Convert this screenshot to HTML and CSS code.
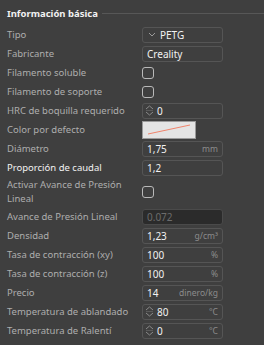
FILE: index.html
```html
<!DOCTYPE html>
<html lang="es">
<head>
  <meta charset="UTF-8">
  <meta name="viewport" content="width=device-width, initial-scale=1.0">
  <title>Información básica</title>
  <link rel="stylesheet" href="styles.css">
</head>
<body>
  <div class="section-head">
    <span class="section-title">Información básica</span>
    <span class="section-line"></span>
  </div>

  <div class="props">
    <div class="row">
      <label>Tipo</label>
      <div class="field combo">
        <svg class="chev" width="8" height="5" viewBox="0 0 8 5"><path d="M1 1 L4 4 L7 1" fill="none" stroke="#9a9a9a" stroke-width="1"/></svg>
        <span class="val">PETG</span>
      </div>
    </div>
    <div class="row">
      <label>Fabricante</label>
      <div class="field"><span class="val">Creality</span></div>
    </div>
    <div class="row">
      <label>Filamento soluble</label>
      <span class="check"></span>
    </div>
    <div class="row">
      <label>Filamento de soporte</label>
      <span class="check"></span>
    </div>
    <div class="row">
      <label>HRC de boquilla requerido</label>
      <div class="field spin">
        <svg class="arrows" width="9" height="13" viewBox="0 0 9 13"><path d="M1 5 L4.5 2 L8 5 M1 8 L4.5 11 L8 8" fill="none" stroke="#8a8a8a" stroke-width="1"/><path d="M1 6.5 H8" stroke="#5a5a5a" stroke-width="1"/></svg>
        <span class="val">0</span>
      </div>
    </div>
    <div class="row">
      <label>Color por defecto</label>
      <div class="swatch">
        <svg width="52" height="16" viewBox="0 0 52 16"><path d="M5 12 L47 3" stroke="#f0846c" stroke-width="1"/></svg>
      </div>
    </div>
    <div class="row">
      <label>Diámetro</label>
      <div class="field"><span class="val">1,75</span><span class="unit">mm</span></div>
    </div>
    <div class="row">
      <label class="bright">Proporción de caudal</label>
      <div class="field"><span class="val">1,2</span></div>
    </div>
    <div class="row tall">
      <label>Activar Avance de Presión Lineal</label>
      <span class="check"></span>
    </div>
    <div class="row">
      <label>Avance de Presión Lineal</label>
      <div class="field disabled"><span class="val">0.072</span></div>
    </div>
    <div class="row">
      <label>Densidad</label>
      <div class="field"><span class="val">1,23</span><span class="unit">g/cm³</span></div>
    </div>
    <div class="row">
      <label>Tasa de contracción (xy)</label>
      <div class="field"><span class="val">100</span><span class="unit">%</span></div>
    </div>
    <div class="row">
      <label>Tasa de contracción (z)</label>
      <div class="field"><span class="val">100</span><span class="unit">%</span></div>
    </div>
    <div class="row">
      <label>Precio</label>
      <div class="field"><span class="val">14</span><span class="unit">dinero/kg</span></div>
    </div>
    <div class="row">
      <label>Temperatura de ablandado</label>
      <div class="field spin">
        <svg class="arrows" width="9" height="13" viewBox="0 0 9 13"><path d="M1 5 L4.5 2 L8 5 M1 8 L4.5 11 L8 8" fill="none" stroke="#8a8a8a" stroke-width="1"/><path d="M1 6.5 H8" stroke="#5a5a5a" stroke-width="1"/></svg>
        <span class="val">80</span><span class="unit">°C</span>
      </div>
    </div>
    <div class="row">
      <label>Temperatura de Ralentí</label>
      <div class="field spin">
        <svg class="arrows" width="9" height="13" viewBox="0 0 9 13"><path d="M1 5 L4.5 2 L8 5 M1 8 L4.5 11 L8 8" fill="none" stroke="#8a8a8a" stroke-width="1"/><path d="M1 6.5 H8" stroke="#5a5a5a" stroke-width="1"/></svg>
        <span class="val">0</span><span class="unit">°C</span>
      </div>
    </div>
  </div>
</body>
</html>
```

FILE: styles.css
```css
html, body {
  margin: 0;
  padding: 0;
  background-color: #3f3f3f;
  font-family: "Noto Sans", "Open Sans", sans-serif;
  font-size: 9.5px;
  color: #aeaeae;
}

.section-head {
  display: flex;
  align-items: center;
  height: 25px;
  padding-left: 7px;
  padding-top: 2px;
  box-sizing: border-box;
}

.section-title {
  font-weight: bold;
  font-size: 9.5px;
  color: #f2f2f2;
  white-space: nowrap;
}

.section-line {
  flex-grow: 1;
  height: 1px;
  margin-left: 4px;
  background-color: #575757;
}

.props {
  display: flex;
  flex-direction: column;
}

.row {
  display: grid;
  grid-template-columns: 135px 81px;
  align-items: center;
  height: 19px;
  padding-left: 7px;
}

.row.tall {
  height: 30px;
}

.row label {
  line-height: 14px;
  white-space: nowrap;
}

.row.tall label {
  white-space: normal;
  padding-right: 4px;
}

.row label.bright {
  color: #f2f2f2;
}

.field {
  display: flex;
  align-items: center;
  height: 16px;
  box-sizing: border-box;
  border: 1px solid #555;
  border-radius: 3px;
  padding: 0 4px;
  color: #f2f2f2;
  font-size: 10px;
}

.field .val {
  flex-grow: 1;
}

.field .unit {
  color: #8c8c8c;
  font-size: 8.5px;
}

.field.combo .chev {
  margin-right: 4px;
  margin-left: 1px;
}

.field.spin {
  padding-left: 2px;
}

.field.spin .arrows {
  margin-right: 3px;
}

.field.disabled {
  background-color: #2b2b2b;
  border-color: #4a4a4a;
  color: #6c6c6c;
}

.check {
  display: block;
  width: 12px;
  height: 12px;
  box-sizing: border-box;
  border: 1px solid #b9b9b9;
  border-radius: 3px;
}

.swatch {
  display: flex;
  align-items: center;
  justify-content: center;
  width: 54px;
  height: 18px;
  box-sizing: border-box;
  background-color: #e4e4e4;
  border: 1px solid #9a9a9a;
}
```
